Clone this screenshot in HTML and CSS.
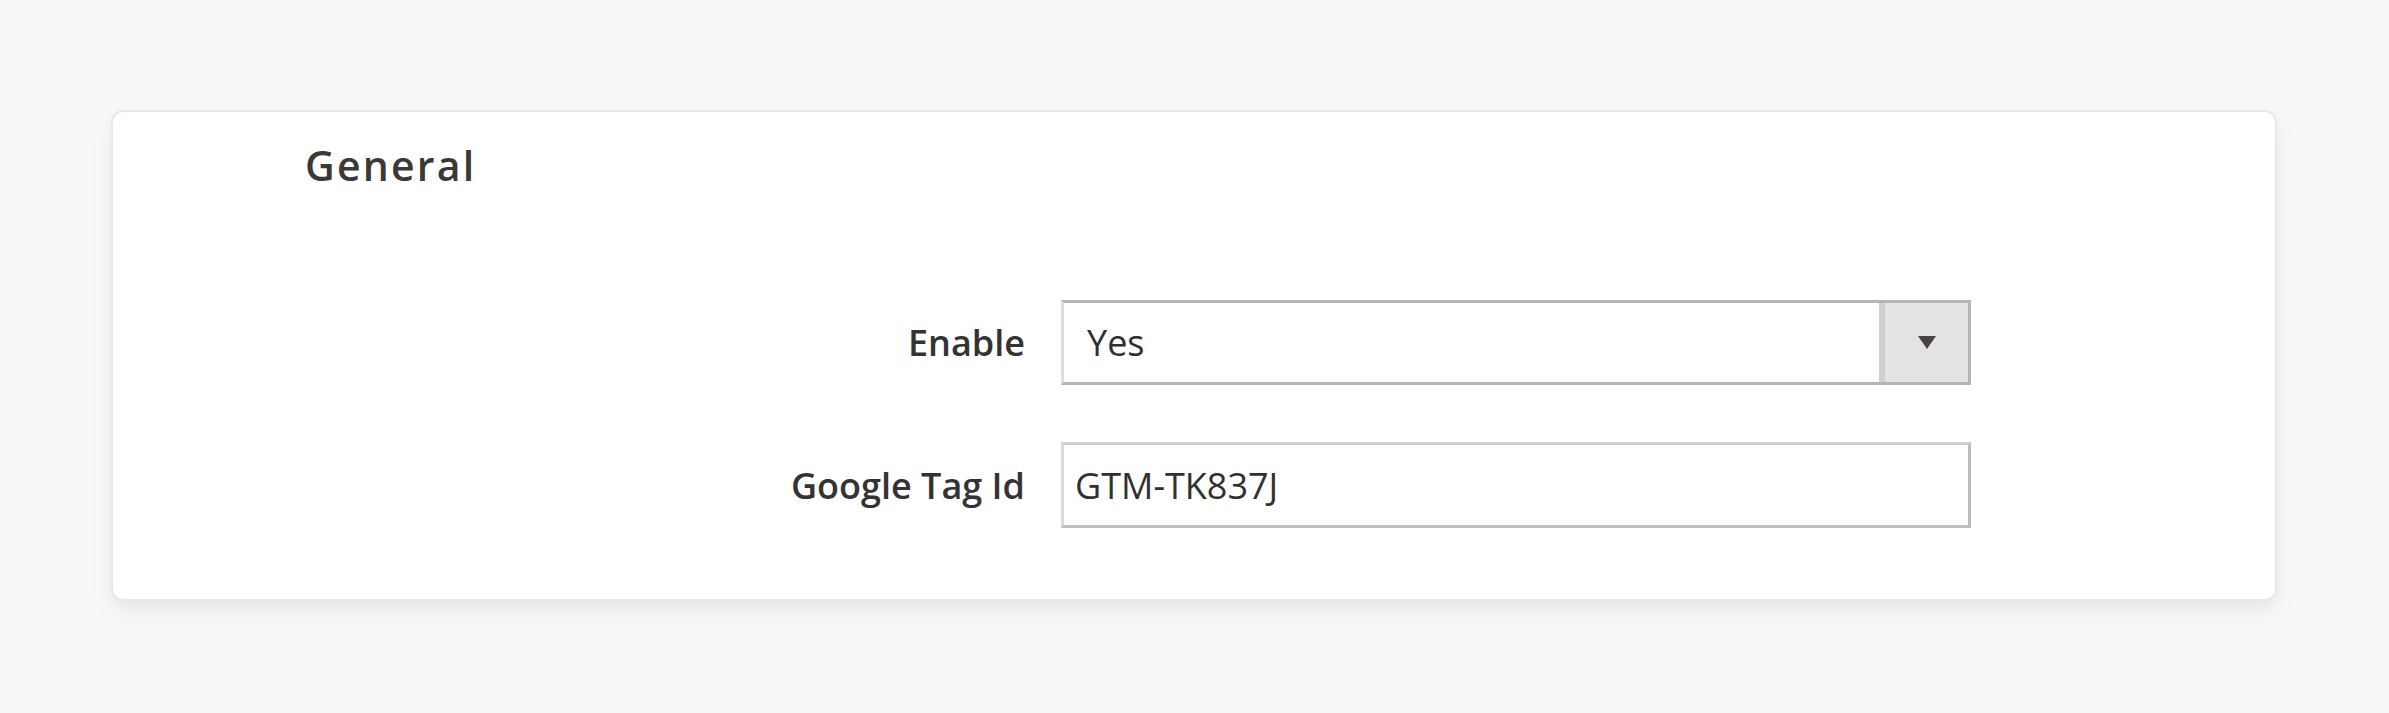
FILE: index.html
```html
<!DOCTYPE html>
<html lang="en">
<head>
<meta charset="utf-8">
<title>General</title>
<link rel="stylesheet" href="styles.css">
</head>
<body>
<div class="page">
  <section class="card">
    <h2 class="card-title">General</h2>
    <div class="form">
      <div class="form-row">
        <label class="form-label" for="enable">Enable</label>
        <div class="select">
          <span class="select-value" id="enable">Yes</span>
          <span class="select-btn"><span class="caret"></span></span>
        </div>
      </div>
      <div class="form-row">
        <label class="form-label" for="tag">Google Tag Id</label>
        <div class="text-input" id="tag">GTM-TK837J</div>
      </div>
    </div>
  </section>
</div>
</body>
</html>
```
FILE: styles.css
```css
html, body {
  margin: 0;
  padding: 0;
  background: #f8f8f8;
}
body {
  font-family: "Open Sans", "Noto Sans", sans-serif;
  color: #303030;
}
.page {
  padding: 110px 112px 112px 111px;
}
.card {
  background: #fff;
  border: 2px solid #e9e9e9;
  border-radius: 12px;
  box-shadow: 0 12px 24px rgba(0, 0, 0, 0.05), 0 4px 10px rgba(0,0,0,0.03);
  height: 491px;
  box-sizing: border-box;
  padding-top: 25px;
}
.card-title {
  margin: 0;
  padding-left: 192px;
  font-size: 41px;
  line-height: 56px;
  font-weight: 600;
  letter-spacing: 2.2px;
  color: #3b3836;
}
.form {
  display: flex;
  flex-direction: column;
  gap: 57px;
  margin-top: 107px;
}
.form-row {
  display: grid;
  grid-template-columns: 912px 910px;
  column-gap: 36px;
  align-items: center;
}
.form-label {
  text-align: right;
  font-size: 36px;
  font-weight: 600;
  color: #333333;
}
.select {
  display: flex;
  height: 85px;
  box-sizing: border-box;
  border-style: solid;
  border-width: 3px;
  border-color: #b6b6b6 #b5b5b5 #b6b6b6 #dedede;
  background: #fff;
}
.select-value {
  flex: 1;
  display: flex;
  align-items: center;
  padding-left: 23px;
  font-size: 36px;
}
.select-btn {
  width: 83px;
  display: flex;
  align-items: center;
  justify-content: center;
  background: #e3e3e3;
  border-left: 6px solid #cfcfcf;
}
.caret {
  width: 0;
  height: 0;
  border-left: 9px solid transparent;
  border-right: 9px solid transparent;
  border-top: 13px solid #4a4240;
}
.text-input {
  display: flex;
  align-items: center;
  height: 86px;
  box-sizing: border-box;
  border-style: solid;
  border-width: 3px;
  border-color: #d2d2d2 #bbbbbb #bdbdbd #dadada;
  padding-left: 11px;
  font-size: 36px;
  background: #fff;
}
```
